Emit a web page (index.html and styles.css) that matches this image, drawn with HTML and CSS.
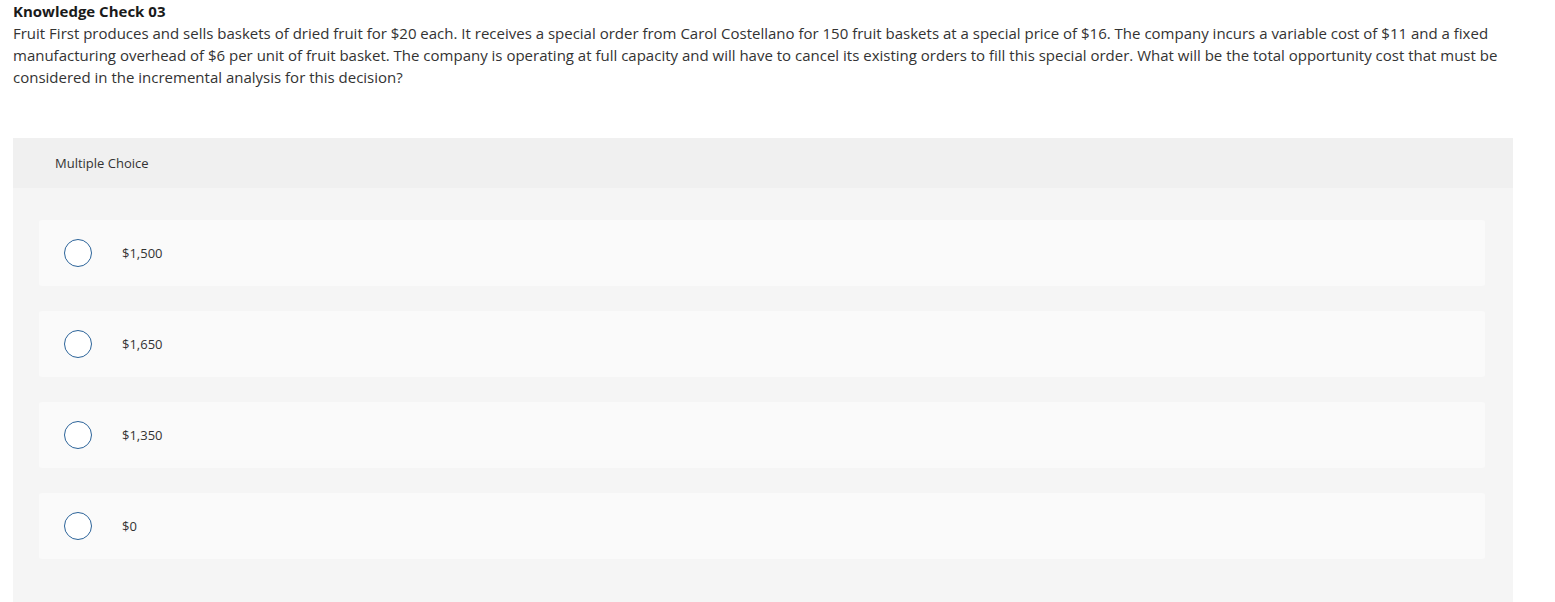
FILE: index.html
```html
<!DOCTYPE html>
<html>
<head>
<meta charset="utf-8">
<link rel="stylesheet" href="styles.css">
</head>
<body>
<div class="page">
  <h1 class="title">Knowledge Check 03</h1>
  <p class="question">Fruit First produces and sells baskets of dried fruit for $20 each. It receives a special order from Carol Costellano for 150 fruit baskets at a special price of $16. The company incurs a variable cost of $11 and a fixed manufacturing overhead of $6 per unit of fruit basket. The company is operating at full capacity and will have to cancel its existing orders to fill this special order. What will be the total opportunity cost that must be considered in the incremental analysis for this decision?</p>
  <div class="panel">
    <div class="panel-head">Multiple Choice</div>
    <div class="panel-body">
      <div class="option"><span class="radio"></span><span class="label">$1,500</span></div>
      <div class="option"><span class="radio"></span><span class="label">$1,650</span></div>
      <div class="option"><span class="radio"></span><span class="label">$1,350</span></div>
      <div class="option"><span class="radio"></span><span class="label">$0</span></div>
    </div>
  </div>
</div>
</body>
</html>
```

FILE: styles.css
```css
html, body {
  margin: 0;
  padding: 0;
  background: #ffffff;
}
body {
  font-family: "Open Sans", "Liberation Sans", sans-serif;
  color: #333333;
}
.page {
  padding: 1px 0 0 13px;
  width: 1500px;
}
.title {
  margin: 0;
  font-size: 15px;
  font-weight: 700;
  line-height: 21px;
  color: #1a1a1a;
}
.question {
  margin: 0;
  font-size: 15px;
  line-height: 22px;
  color: #333333;
  width: 1500px;
}
.panel {
  margin-top: 50px;
  width: 1500px;
}
.panel-head {
  background: #f0f0f0;
  height: 50px;
  display: flex;
  align-items: center;
  padding-left: 42px;
  font-size: 13px;
  color: #333333;
}
.panel-body {
  background: #f5f5f5;
  padding: 32px 28px 60px 26px;
  display: flex;
  flex-direction: column;
  gap: 25px;
}
.option {
  background: #fafafa;
  border-radius: 3px;
  height: 66px;
  display: flex;
  align-items: center;
  padding-left: 25px;
}
.radio {
  width: 26px;
  height: 26px;
  border: 1.5px solid #2b6399;
  border-radius: 50%;
  background: #ffffff;
  flex: none;
}
.label {
  margin-left: 30px;
  font-size: 13px;
  color: #333333;
}
```
